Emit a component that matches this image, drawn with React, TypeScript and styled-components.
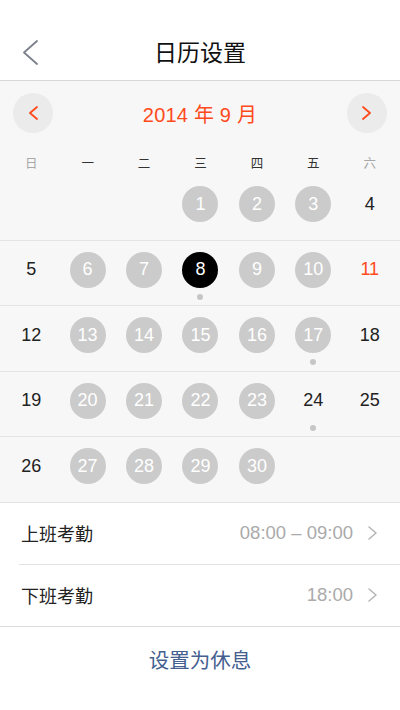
import styled, { createGlobalStyle } from "styled-components";

const GlobalStyle = createGlobalStyle`
  html, body {
    margin: 0;
    padding: 0;
    background: #ffffff;
  }
  body {
    font-family: "Liberation Sans", "Noto Sans CJK SC", sans-serif;
    color: #222;
  }
`;

const Page = styled.div`
  width: 400px;
  height: 710px;
  display: flex;
  flex-direction: column;
  background: #ffffff;
  overflow: hidden;
`;

const NavBar = styled.header`
  position: relative;
  height: 60px;
  padding-top: 20px;
  display: flex;
  align-items: center;
  justify-content: center;
  border-bottom: 1px solid #d8d8d8;
  background: #ffffff;
`;

const BackButton = styled.button`
  position: absolute;
  left: 20px;
  top: 38px;
  width: 20px;
  height: 28px;
  padding: 0;
  border: none;
  background: none;
  display: flex;
  align-items: center;
  justify-content: center;
`;

const Title = styled.h1`
  margin: 2px 0 0;
  font-size: 23px;
  font-weight: 400;
  color: #111;
`;

const Calendar = styled.section`
  background: #f7f7f7;
  padding-top: 12px;
`;

const MonthBar = styled.div`
  height: 40px;
  padding: 0 13px;
  display: flex;
  align-items: center;
  justify-content: space-between;
`;

const RoundButton = styled.button`
  width: 40px;
  height: 40px;
  border-radius: 50%;
  border: none;
  padding: 0;
  background: #ebebeb;
  display: flex;
  align-items: center;
  justify-content: center;
`;

const MonthTitle = styled.div`
  font-size: 20px;
  color: #ff4a1c;
  letter-spacing: 0.2px;
`;

const WeekHeader = styled.div`
  margin-top: 16px;
  height: 26px;
  display: grid;
  grid-template-columns: repeat(7, 1fr);
  align-items: center;
  padding: 0 2px 0 3px;
`;

const WeekLabel = styled.span<{ $weekend: boolean }>`
  text-align: center;
  font-size: 12.5px;
  color: ${(p) => (p.$weekend ? "#a8a8a8" : "#333")};
`;

const WeekRow = styled.div`
  height: 64.5px;
  display: grid;
  grid-template-columns: repeat(7, 1fr);
  border-bottom: 1px solid #e4e4e4;
  padding: 0 2px 0 3px;
`;

const DayCell = styled.div`
  display: flex;
  flex-direction: column;
  align-items: center;
  padding-top: 11px;
`;

const DayNumber = styled.div<{ $kind: "work" | "today" | "plain" | "holiday" }>`
  width: 36px;
  height: 36px;
  border-radius: 50%;
  display: flex;
  align-items: center;
  justify-content: center;
  font-size: 18px;
  background: ${(p) =>
    p.$kind === "work" ? "#cbcbcb" : p.$kind === "today" ? "#000" : "transparent"};
  color: ${(p) =>
    p.$kind === "work" || p.$kind === "today"
      ? "#fff"
      : p.$kind === "holiday"
      ? "#ff4a1c"
      : "#222"};
`;

const Dot = styled.span<{ $show: boolean }>`
  margin-top: 6px;
  width: 6px;
  height: 6px;
  border-radius: 50%;
  background: ${(p) => (p.$show ? "#c6c6c6" : "transparent")};
`;

const List = styled.section`
  background: #ffffff;
  border-bottom: 1px solid #dcdcdc;
`;

const ListRow = styled.div<{ $last?: boolean }>`
  margin-left: 19px;
  height: 61px;
  padding-right: 23px;
  display: flex;
  align-items: center;
  justify-content: space-between;
  border-bottom: ${(p) => (p.$last ? "none" : "1px solid #e2e2e2")};
`;

const RowLabel = styled.span`
  font-size: 18px;
  color: #222;
  padding-left: 2px;
`;

const RowValue = styled.span`
  display: flex;
  align-items: center;
  gap: 15px;
  font-size: 18.5px;
  color: #aaaaaa;
`;

const RestButton = styled.button`
  height: 64px;
  border: none;
  background: none;
  font-family: inherit;
  font-size: 20.5px;
  color: #44608f;
  padding: 0;
`;

type Day = { n: number; kind: "work" | "today" | "plain" | "holiday"; dot?: boolean } | null;

const weeks: Day[][] = [
  [null, null, null, { n: 1, kind: "work" }, { n: 2, kind: "work" }, { n: 3, kind: "work" }, { n: 4, kind: "plain" }],
  [
    { n: 5, kind: "plain" },
    { n: 6, kind: "work" },
    { n: 7, kind: "work" },
    { n: 8, kind: "today", dot: true },
    { n: 9, kind: "work" },
    { n: 10, kind: "work" },
    { n: 11, kind: "holiday" },
  ],
  [
    { n: 12, kind: "plain" },
    { n: 13, kind: "work" },
    { n: 14, kind: "work" },
    { n: 15, kind: "work" },
    { n: 16, kind: "work" },
    { n: 17, kind: "work", dot: true },
    { n: 18, kind: "plain" },
  ],
  [
    { n: 19, kind: "plain" },
    { n: 20, kind: "work" },
    { n: 21, kind: "work" },
    { n: 22, kind: "work" },
    { n: 23, kind: "work" },
    { n: 24, kind: "plain", dot: true },
    { n: 25, kind: "plain" },
  ],
  [
    { n: 26, kind: "plain" },
    { n: 27, kind: "work" },
    { n: 28, kind: "work" },
    { n: 29, kind: "work" },
    { n: 30, kind: "work" },
    null,
    null,
  ],
];

const weekdays = ["日", "一", "二", "三", "四", "五", "六"];

function Chevron({ dir, color, w, h, stroke }: { dir: "left" | "right"; color: string; w: number; h: number; stroke: number }) {
  const d = dir === "left" ? `M${w - 1} 1 L1 ${h / 2} L${w - 1} ${h - 1}` : `M1 1 L${w - 1} ${h / 2} L1 ${h - 1}`;
  return (
    <svg width={w} height={h} viewBox={`0 0 ${w} ${h}`} fill="none">
      <path d={d} stroke={color} strokeWidth={stroke} strokeLinecap="round" strokeLinejoin="round" />
    </svg>
  );
}

export default function App() {
  return (
    <Page>
      <GlobalStyle />
      <NavBar>
        <BackButton>
          <Chevron dir="left" color="#7b808b" w={15} h={25} stroke={1.8} />
        </BackButton>
        <Title>日历设置</Title>
      </NavBar>

      <Calendar>
        <MonthBar>
          <RoundButton>
            <Chevron dir="left" color="#ff4a1c" w={9} h={14} stroke={1.8} />
          </RoundButton>
          <MonthTitle>2014 年 9 月</MonthTitle>
          <RoundButton>
            <Chevron dir="right" color="#ff4a1c" w={9} h={14} stroke={1.8} />
          </RoundButton>
        </MonthBar>

        <WeekHeader>
          {weekdays.map((w, i) => (
            <WeekLabel key={w} $weekend={i === 0 || i === 6}>
              {w}
            </WeekLabel>
          ))}
        </WeekHeader>

        {weeks.map((week, wi) => (
          <WeekRow key={wi}>
            {week.map((day, di) => (
              <DayCell key={di}>
                {day && (
                  <>
                    <DayNumber $kind={day.kind}>{day.n}</DayNumber>
                    <Dot $show={!!day.dot} />
                  </>
                )}
              </DayCell>
            ))}
          </WeekRow>
        ))}
      </Calendar>

      <List>
        <ListRow>
          <RowLabel>上班考勤</RowLabel>
          <RowValue>
            08:00 – 09:00
            <Chevron dir="right" color="#b4b4b4" w={9} h={14} stroke={1.5} />
          </RowValue>
        </ListRow>
        <ListRow $last>
          <RowLabel>下班考勤</RowLabel>
          <RowValue>
            18:00
            <Chevron dir="right" color="#b4b4b4" w={9} h={14} stroke={1.5} />
          </RowValue>
        </ListRow>
      </List>

      <RestButton>设置为休息</RestButton>
    </Page>
  );
}
